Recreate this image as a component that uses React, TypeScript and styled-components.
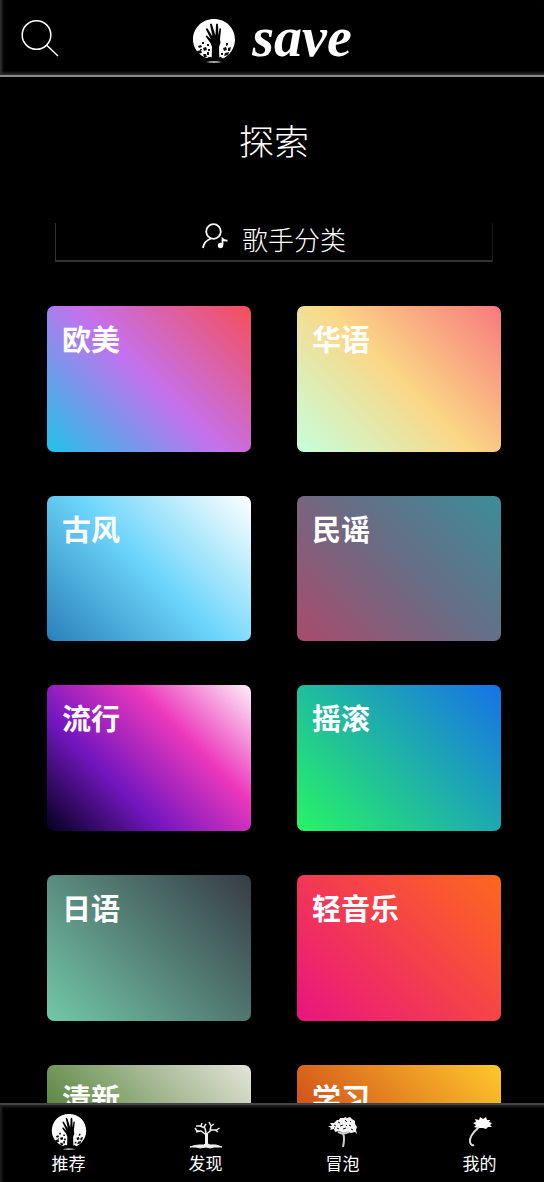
import React from 'react';
import styled, { createGlobalStyle } from 'styled-components';

const GlobalStyle = createGlobalStyle`
  * { box-sizing: border-box; }
  html, body, #root { height: 100%; }
  body {
    margin: 0;
    background: #000;
    color: #fff;
    font-family: "Noto Sans CJK SC", sans-serif;
  }
`;

const Screen = styled.div`
  display: flex;
  flex-direction: column;
  height: 100%;
  overflow: hidden;
  background: #000;
`;

const Header = styled.header`
  flex: none;
  display: grid;
  grid-template-columns: 80px 1fr 80px;
  align-items: center;
  height: 77px;
  border-bottom: 2px solid #8a8a8a;
  box-shadow: inset 2px -2px 3px #333;
`;

const SearchButton = styled.button`
  display: flex;
  margin: 0;
  padding: 0 0 0 20px;
  border: 0;
  background: none;
  color: inherit;
  cursor: pointer;
`;

const Brand = styled.a`
  display: flex;
  align-items: center;
  justify-content: center;
  gap: 16px;
  height: 75px;
  padding-top: 6px;
  color: #fff;
  text-decoration: none;
`;

const Wordmark = styled.span`
  font: italic bold 56px/56px "Liberation Serif", serif;
  height: 64px;
`;

const Content = styled.main`
  flex: 1;
  min-height: 0;
  overflow-y: auto;
  scrollbar-width: none;
`;

const Title = styled.h1`
  margin: 0;
  padding: 38px 0 58px 4px;
  font-size: 35px;
  line-height: 50px;
  font-weight: 300;
  text-align: center;
`;

const SingerLink = styled.a`
  display: flex;
  justify-content: center;
  gap: 12px;
  height: 39px;
  margin: 0 51px 44px 55px;
  border: 1px solid #141414;
  border-top: 0;
  border-left-color: #333;
  border-bottom: 2px solid #333;
  color: #fff;
  font-size: 26px;
  line-height: 32px;
  font-weight: 300;
  text-decoration: none;
`;

const Grid = styled.div`
  display: grid;
  grid-template-columns: 1fr 1fr;
  gap: 44px 46px;
  padding: 0 43px 44px 47px;
`;

const Card = styled.a<{ $stops: string }>`
  aspect-ratio: 7 / 5;
  padding: 12px 15px;
  border-radius: 7px;
  background: linear-gradient(45deg, ${(p) => p.$stops});
  color: #fff;
  font-size: 29px;
  line-height: 40px;
  font-weight: 700;
  text-decoration: none;
`;

const TabBar = styled.nav`
  flex: none;
  display: grid;
  grid-template-columns: repeat(4, 1fr);
  height: 79px;
  margin-right: -4px;
  border-top: 2px solid #444;
  box-shadow: inset 2px 2px 3px #222;
`;

const Tab = styled.a`
  display: flex;
  flex-direction: column;
  align-items: center;
  padding-top: 9px;
  color: #fff;
  font-size: 17px;
  line-height: 26px;
  text-decoration: none;
`;

const genres = [
  { name: '欧美', stops: '#1fc3ea, #c471ed, #f64f59' },
  { name: '华语', stops: '#c6ffdd, #fbd786, #f7797d' },
  { name: '古风', stops: '#2980b9, #6dd5fa, #ffffff' },
  { name: '民谣', stops: '#aa4b6b, #6b6b83, #3b8d99' },
  { name: '流行', stops: '#03001e, #7316c0, #ec38bc, #fdeff9' },
  { name: '摇滚', stops: '#28f465, #1672e8' },
  { name: '日语', stops: '#73c8a9, #373b44' },
  { name: '轻音乐', stops: '#ea1480, #fd681c' },
  { name: '清新', stops: '#215f00, #e4e4d9' },
  { name: '学习', stops: '#bd1f12, #ffc82c' },
];

const HandIcon = ({ size }: { size: number }) => (
  <svg width={size} height={size} viewBox="0 0 44 44" aria-hidden="true">
    <path d="M22 0C34 0 43 9 43 20.500 43 29 38 36 31 39.500l-3-2-1 1.500-10-1-2 1-3-1C5 34 1 28 1 20.500 1 9 10 0 22 0Z" fill="#fff" />
    <path d="M19.500 44 20 28 18.500 24 14 18q-1-2 1-1.500l4 4-5-10q0-2 1.500-1l5 8-2.500-12q1-2 2 0l3.500 11 .5-11q1-2 2 0l.5 11 1-7q1.500-1 1.500 1L28 20l.5 4L27 28l.5 16Z" fill="#000" />
    <path d="M6 27l3-1 1 2-3 1ZM10 23h2v2h-2ZM11 29l3-1 1 3-3 1ZM15 33h2v3h-2ZM5 32l4-1 1 3-4 1ZM15 25h2v2h-2ZM31 29l3-1 1 3-3 1ZM34 24l2 0 0 2-2 1ZM33 34l4-1-1 3-4 1ZM36 29l3-1-1 4-2 0ZM29 34h2v2h-2ZM16 30h2v2h-2ZM11 35l3 0 1 3-3 0ZM8 30h2v1H8Z" fill="#111" />
    <path d="M14 43q8-2 16 0-8 2-16 0Z" fill="#aaa" />
  </svg>
);

const BareTreeIcon = () => (
  <svg width="36" height="36" viewBox="0 0 36 36" fill="none" stroke="#eee" aria-hidden="true">
    <path d="M18.500 31V19" strokeWidth="3" />
    <path d="M18.500 21 13 17H9L7 14M18.500 20l5-4h5l3-2M12 17l-4 1M18 19l-1-5-5-2-4 0M22 17l1-5-2-4M13 12l1-3M27 16l3 2M23 12l3-2M16 13l2-3" strokeWidth="1.500" />
    <path d="M2 33q5-2 9-2l5 0 2-2 4 2q6-1 12 2l-8 0-4 1-4-1-6 1-4-1Z" fill="#eee" strokeWidth="1" />
  </svg>
);

const LeafyTreeIcon = () => (
  <svg width="36" height="36" viewBox="0 0 36 36" aria-hidden="true">
    <path d="M3 12l4 0-2-3 4 0 3-3 2 0 1-2 4 0 1-1 2 1 3-1 2 2 3 2 0 3 2 3-1 3 1 4-2-2-4 1-3-1-5 1-4-2-4 1-1-3-4 1 1-2Z" fill="#f4f4f4" />
    <path d="M9 11l2 1M13 8l2 1M20 6l2 2M15 12l3-1M24 11l2 1M12 14l2 1M18 15l3-1M26 15l2 1M25 7l1 1M9 14l1 0M21 11l1 1" stroke="#111" />
    <path d="M13 18l5 2 6-2M18 19q2 5 0 14" fill="none" stroke="#ccc" strokeWidth="2" />
  </svg>
);

const FlowerIcon = () => (
  <svg width="36" height="36" viewBox="0 0 36 36" aria-hidden="true">
    <path d="M11 9l3-1-1-3 4 1 1-3 3 2 3-2 1 3 3 0-1 2 3 1-2 2 2 2-4 0-2 2-3-1-3 0-2 0-4-1 2-2Z" fill="#fff" />
    <path d="M17 13Q7 22 8 28q1 4 4 3" fill="none" stroke="#ddd" strokeWidth="2" />
  </svg>
);

const tabs = [
  { name: '推荐', icon: <HandIcon size={36} /> },
  { name: '发现', icon: <BareTreeIcon /> },
  { name: '冒泡', icon: <LeafyTreeIcon /> },
  { name: '我的', icon: <FlowerIcon /> },
];

export default function App() {
  return (
    <Screen>
      <GlobalStyle />
      <Header>
        <SearchButton aria-label="搜索">
          <svg width="40" height="40" viewBox="0 0 40 40" fill="none" stroke="#fff" strokeWidth="1.5">
            <circle cx="16.5" cy="17" r="14.3" />
            <path d="M26.5 27 38 38" />
          </svg>
        </SearchButton>
        <Brand href="#home">
          <HandIcon size={44} />
          <Wordmark>save</Wordmark>
        </Brand>
      </Header>
      <Content>
        <Title>探索</Title>
        <SingerLink href="#singers">
          <svg width="28" height="28" viewBox="0 0 28 28" fill="none" stroke="#fff" strokeWidth="1.8" aria-hidden="true">
            <circle cx="11.500" cy="8.500" r="7.300" />
            <path d="M9 15.500Q2 18 1 25M20.500 22v-6q2 2 5 1.500" />
            <circle cx="18.500" cy="22.500" r="1.800" fill="#fff" />
          </svg>
          歌手分类
        </SingerLink>
        <Grid>
          {genres.map((g) => (
            <Card key={g.name} href={`#${g.name}`} $stops={g.stops}>
              {g.name}
            </Card>
          ))}
        </Grid>
      </Content>
      <TabBar>
        {tabs.map((t) => (
          <Tab key={t.name} href={`#${t.name}`}>
            {t.icon}
            {t.name}
          </Tab>
        ))}
      </TabBar>
    </Screen>
  );
}
